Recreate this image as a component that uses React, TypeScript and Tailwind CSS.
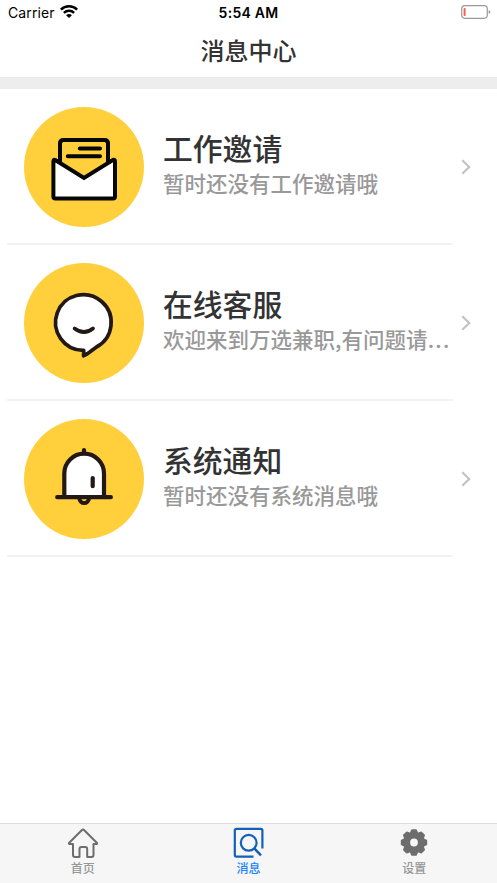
import type { ReactNode } from "react";

interface MessageRowProps {
  icon: ReactNode;
  title: string;
  desc: string;
  more?: boolean;
}

interface TabItemProps {
  icon: ReactNode;
  label: string;
  active?: boolean;
}

const TEETH = [0, 45, 90, 135, 180, 225, 270, 315];

function EnvelopeIcon() {
  return (
    <svg viewBox="0 0 120 120" className="w-[120px] h-[120px]" fill="none" stroke="#050805" strokeWidth="4" strokeLinecap="round" strokeLinejoin="round">
      <path d="M36 56V36.5Q36 33 39.5 33H80.5Q84 33 84 36.5V56" />
      <path d="M55.8 41.5H76M43.8 49.2H76" />
      <path d="M31.2 53L60 71L88.8 53Q91 52.2 91 54.5V89.500Q91 91.600 89 91.600H31.500Q29.400 91.600 29.400 89.500V54.500Q29.400 52.200 31.200 53Z" fill="#fff" strokeLinejoin="miter" />
    </svg>
  );
}

function ChatIcon() {
  return (
    <svg viewBox="0 0 120 120" className="w-[120px] h-[120px]" fill="none" stroke="#231815" strokeWidth="3.7" strokeLinecap="round" strokeLinejoin="round">
      <path d="M59.700 87.300A27.800 27.800 0 1 1 72.500 84C68 87 63.500 91.500 59.600 92.800Z" fill="#fff" />
      <path d="M50.600 65.500Q60 72.500 69 65.500" />
    </svg>
  );
}

function BellIcon() {
  return (
    <svg viewBox="0 0 120 120" className="w-[120px] h-[120px]" fill="none" stroke="#231815" strokeWidth="4.200" strokeLinecap="round" strokeLinejoin="round">
      <path d="M60 31V34" />
      <path d="M40.300 78V54.500A19.850 19.850 0 0 1 80 54.500V78" fill="#fff" />
      <path d="M33.200 78.200H86.900M68.700 59V67.200" />
      <path d="M55.300 79.500A4.900 5.300 0 0 0 65 79.500" strokeWidth="4" />
    </svg>
  );
}

function HomeIcon() {
  return (
    <svg viewBox="0 0 32 32" className="w-8 h-8" fill="none" stroke="#6d6d6d" strokeWidth="2" strokeLinejoin="round">
      <path d="M2 17L14.700 4.200Q16 3 17.300 4.200L30 17Q30.500 18 29 18H26.500V29Q26.500 31 24.500 31H20.200V23Q20.200 21 18.200 21H14.500Q12.500 21 12.500 23V31H8Q6 31 6 29V18H3Q1.500 18 2 17Z" />
    </svg>
  );
}

function MessageIcon() {
  return (
    <svg viewBox="0 0 32 32" className="w-8 h-8" fill="none" stroke="#1260b8" strokeWidth="2.200">
      <path d="M29.400 22.500V4.500Q29.400 2.800 27.700 2.800H3.500Q1.800 2.800 1.800 4.500V29Q1.800 30.700 3.500 30.700H20.500" />
      <circle cx="15.700" cy="16.800" r="7.900" />
      <path d="M21.300 22.400L28 29.300" strokeWidth="2.500" />
    </svg>
  );
}

function SettingsIcon() {
  return (
    <svg viewBox="0 0 32 32" className="w-8 h-8" fill="#6d6d6d">
      <circle cx="16" cy="16.500" r="7.200" fill="none" stroke="#6d6d6d" strokeWidth="6.600" />
      {TEETH.map((angle) => (
        <path key={angle} d="M11.500 7.500L13.200 3.800Q13.500 3.300 14.200 3.300H17.800Q18.500 3.300 18.800 3.800L20.500 7.500Z" transform={`rotate(${angle} 16 16.5)`} />
      ))}
    </svg>
  );
}

function StatusBar() {
  return (
    <div className="grid grid-cols-3 items-center h-[25px] pl-2 pr-[6px] text-black font-['Inter',sans-serif]">
      <div className="flex items-center gap-[5px]">
        <span className="text-[14px] tracking-[0.1px]">Carrier</span>
        <svg viewBox="0 0 18 13" className="w-[18px] h-[13px] mb-[2px]" fill="none" stroke="#000" strokeWidth="2.500">
          <path d="M0.900 4.700A11.500 11.500 0 0 1 17.100 4.700M3.900 7.900A7.200 7.200 0 0 1 14.100 7.900" />
          <path d="M9 13L6.100 10.300A4 4 0 0 1 11.900 10.300Z" fill="#000" stroke="none" />
        </svg>
      </div>
      <span className="-ml-[2px] text-center text-[14px] font-semibold tracking-[0.25px]">5:54 AM</span>
      <svg viewBox="0 0 30 14" className="w-[30px] h-[14px] mb-[1px] justify-self-end" fill="none">
        <rect x="0.700" y="0.700" width="25.600" height="12.600" rx="3.200" stroke="#999" strokeWidth="1.200" />
        <rect x="2.600" y="3" width="2" height="8" rx="0.800" fill="#ff5a52" />
        <path d="M27.700 5Q29.300 5.500 29.300 7Q29.300 8.500 27.700 9Z" fill="#999" />
      </svg>
    </div>
  );
}

function MessageRow({ icon, title, desc, more }: MessageRowProps) {
  return (
    <div className="flex h-[156px]">
      <div className="flex w-[446px] ml-[7px] pl-[17px] pt-[18px] border-b-2 border-[#f2f2f2]">
        <div className="w-[120px] h-[120px] shrink-0 rounded-full bg-[#ffcf3c]">{icon}</div>
        <div className="min-w-0 flex-1 ml-[19px] pt-[21px]">
          <h2 className="text-[29.800px] leading-[38px] font-medium text-[#333]">{title}</h2>
          <p className="whitespace-nowrap text-[21.500px] leading-[33px] font-medium text-[#999]">
            {desc}
            {more && <span className="font-['Inter'] font-semibold tracking-[0.8px]">...</span>}
          </p>
        </div>
      </div>
      <svg viewBox="0 0 12 18" className="w-3 h-[18px] ml-[7px] mt-[69px]" fill="none" stroke="#c3c3c6" strokeWidth="2.200">
        <path d="M2.300 2.300L9.200 9L2.300 15.700" />
      </svg>
    </div>
  );
}

function TabItem({ icon, label, active }: TabItemProps) {
  return (
    <div className="flex flex-1 flex-col items-center pt-[2px]">
      {icon}
      <span className={active ? "text-[12px] leading-[19px] font-medium text-[#1683fb]" : "text-[12px] leading-[19px] font-medium text-[#979797]"}>
        {label}
      </span>
    </div>
  );
}

export default function App() {
  return (
    <div className="flex flex-col w-full h-screen overflow-hidden bg-white font-['Noto_Sans_CJK_SC',sans-serif]">
      <StatusBar />
      <h1 className="h-[52px] text-center text-[24px] leading-[50px] font-medium text-[#333]">消息中心</h1>
      <div className="h-3 shrink-0 bg-[#ededed]" />
      <main className="flex-1">
        <MessageRow icon={<EnvelopeIcon />} title="工作邀请" desc="暂时还没有工作邀请哦" />
        <MessageRow icon={<ChatIcon />} title="在线客服" desc="欢迎来到万选兼职,有问题请" more />
        <MessageRow icon={<BellIcon />} title="系统通知" desc="暂时还没有系统消息哦" />
      </main>
      <nav className="flex h-[60px] shrink-0 border-t border-[#dcdcdc] bg-[#f6f6f6]">
        <TabItem icon={<HomeIcon />} label="首页" />
        <TabItem icon={<MessageIcon />} label="消息" active />
        <TabItem icon={<SettingsIcon />} label="设置" />
      </nav>
    </div>
  );
}
